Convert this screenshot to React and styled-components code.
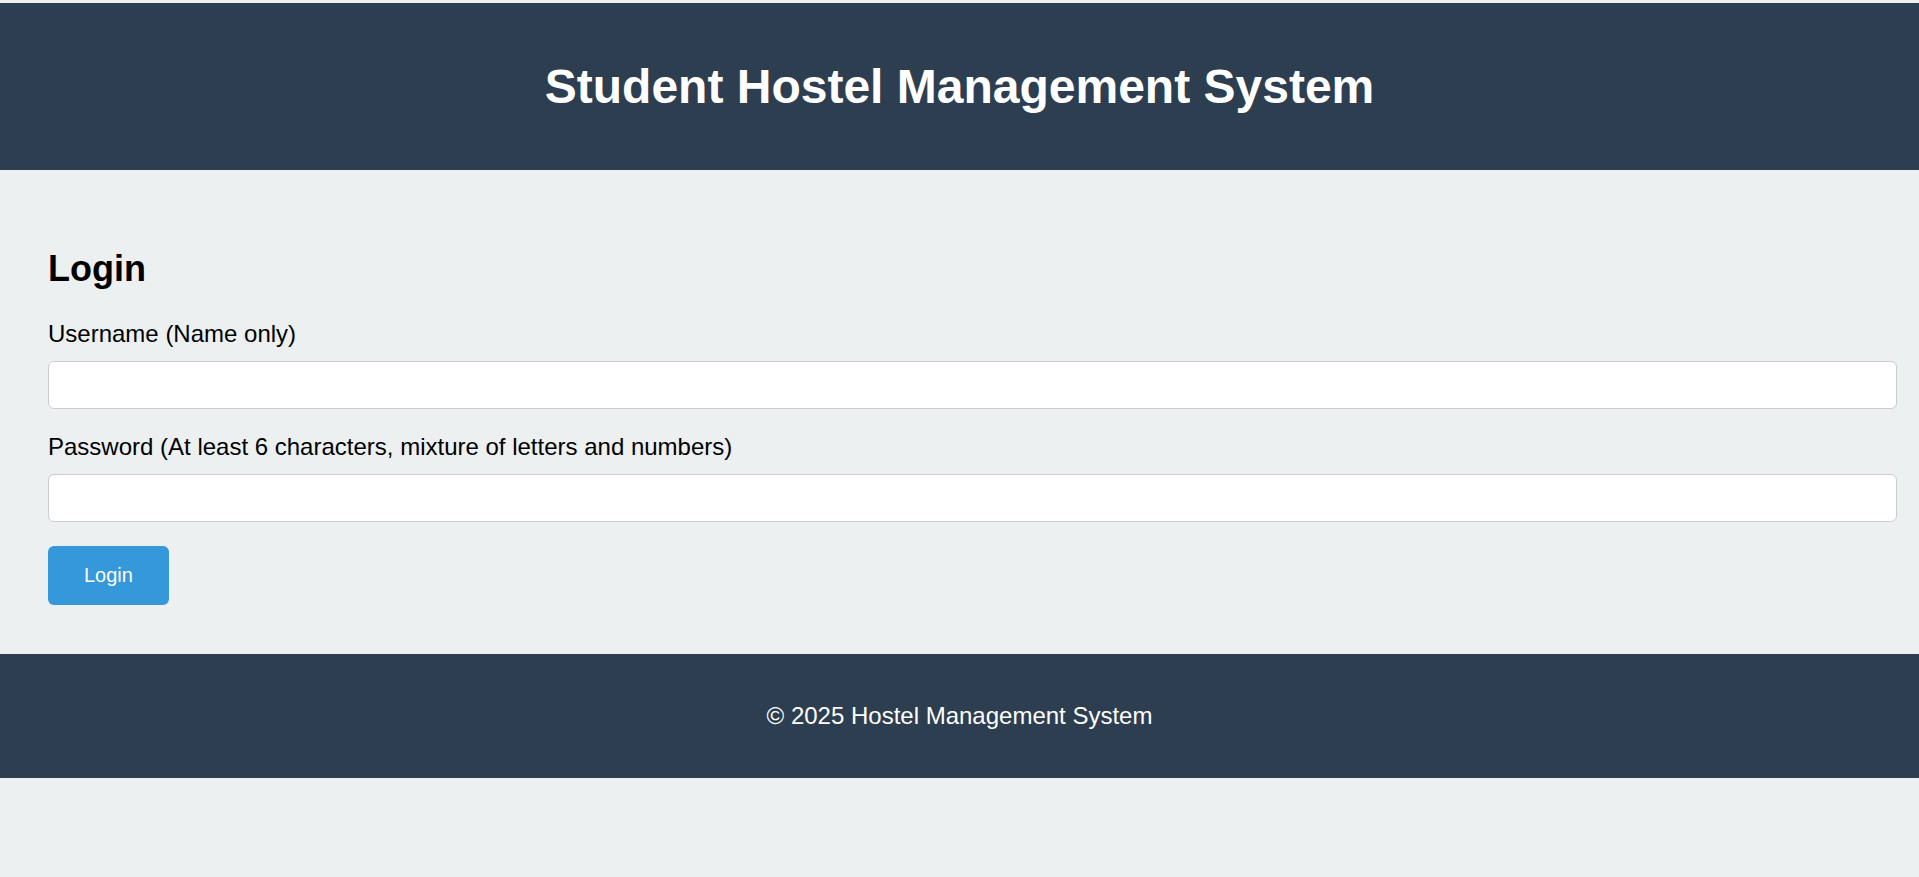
import styled, { createGlobalStyle } from "styled-components";

const GlobalStyle = createGlobalStyle`
  html, body {
    margin: 0;
    background-color: #ecf0f1;
  }

  body {
    padding-top: 3px;
    font-family: Arial, "Liberation Sans", sans-serif;
    font-size: 24px;
    color: #000;
  }
`;

const Header = styled.header`
  background-color: #2c3e50;
  color: #fff;
  padding: 24px;
  text-align: center;
`;

const Title = styled.h1`
  font-size: 48px;
  font-weight: bold;
  margin: 32px 0;
`;

const Main = styled.main`
  padding: 48px 48px 49px;
`;

const Heading = styled.h2`
  font-size: 36px;
  font-weight: bold;
  margin: 30px 0;
`;

const Field = styled.div`
  display: flex;
  flex-direction: column;
  align-items: flex-start;
`;

const Label = styled.label`
  display: block;
  font-size: 24px;
  margin-bottom: 13px;
`;

const Input = styled.input`
  box-sizing: content-box;
  width: 100%;
  height: 22px;
  padding: 12px;
  margin: 0 0 24px;
  border: 1px solid #ccc;
  border-radius: 6px;
  background: #fff;
  font-family: Arial, "Liberation Sans", sans-serif;
  font-size: 20px;
`;

const Button = styled.button`
  background-color: #3498db;
  color: #fff;
  border: none;
  border-radius: 6px;
  padding: 18px 36px;
  font-family: Arial, "Liberation Sans", sans-serif;
  font-size: 20px;
  cursor: pointer;
`;

const Footer = styled.footer`
  background-color: #2c3e50;
  color: #fff;
  text-align: center;
  padding: 24px;
`;

const FooterText = styled.p`
  margin: 24px 0;
  font-size: 24px;
`;

function App() {
  return (
    <>
      <GlobalStyle />
      <Header>
        <Title>Student Hostel Management System</Title>
      </Header>

      <Main>
        <Heading>Login</Heading>
        <form onSubmit={(e) => e.preventDefault()}>
          <Field>
            <Label htmlFor="username">Username (Name only)</Label>
            <Input id="username" type="text" />
          </Field>
          <Field>
            <Label htmlFor="password">
              Password (At least 6 characters, mixture of letters and numbers)
            </Label>
            <Input id="password" type="password" />
          </Field>
          <Button type="submit">Login</Button>
        </form>
      </Main>

      <Footer>
        <FooterText>© 2025 Hostel Management System</FooterText>
      </Footer>
    </>
  );
}

export default App;
